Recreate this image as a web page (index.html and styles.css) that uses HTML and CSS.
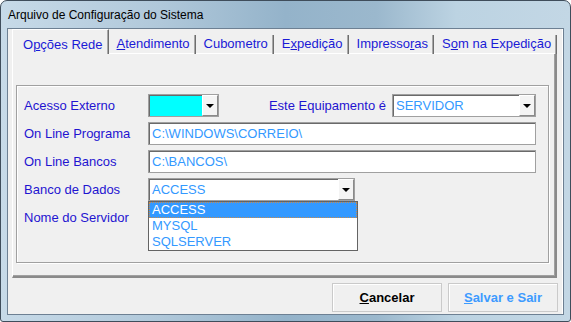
FILE: index.html
```html
<!DOCTYPE html>
<html lang="pt">
<head>
  <meta charset="UTF-8" />
  <title>Arquivo de Configuração do Sistema</title>
  <link rel="stylesheet" href="styles.css">
</head>
<body>
  <div class="window">
    <div class="titlebar">Arquivo de Configuração do Sistema</div>

    <div class="client">
      <div class="tabs">
        <div class="tab-strip">
          <span class="tab active">O<u>p</u>ções Rede</span>
          <span class="tab"><u>A</u>tendimento</span>
          <span class="tab">Cubometro</span>
          <span class="tab">E<u>x</u>pedição</span>
          <span class="tab">Impresso<u>r</u>as</span>
          <span class="tab">S<u>o</u>m na Expedição</span>
        </div>

        <div class="tab-page">
          <div class="frame">
            <div class="row">
              <span class="label">Acesso Externo</span>
              <div class="combo combo-small cyan">
                <span class="value"></span>
                <span class="drop"><span class="arrow"></span></span>
              </div>
              <span class="label label-right">Este Equipamento é</span>
              <div class="combo combo-server">
                <span class="value">SERVIDOR</span>
                <span class="drop"><span class="arrow"></span></span>
              </div>
            </div>

            <div class="row">
              <span class="label">On Line Programa</span>
              <div class="edit">C:\WINDOWS\CORREIO\</div>
            </div>

            <div class="row">
              <span class="label">On Line Bancos</span>
              <div class="edit">C:\BANCOS\</div>
            </div>

            <div class="row">
              <span class="label">Banco de Dados</span>
              <div class="combo combo-db">
                <span class="value">ACCESS</span>
                <span class="drop"><span class="arrow"></span></span>
                <!-- open list of the combo -->
                <ul class="droplist">
                  <li class="selected">ACCESS</li>
                  <li>MYSQL</li>
                  <li>SQLSERVER</li>
                </ul>
              </div>
            </div>

            <div class="row">
              <span class="label">Nome do Servidor</span>
            </div>
          </div>
        </div>
      </div>

      <div class="buttons">
        <button type="button" class="btn"><u>C</u>ancelar</button>
        <button type="button" class="btn btn-save"><u>S</u>alvar e Sair</button>
      </div>
    </div>
  </div>
</body>
</html>
```

FILE: styles.css
```css
body {
  margin: 0;
  background: #ffffff;
  font-family: "Liberation Sans", Arial, sans-serif;
  font-size: 13px;
}
.window {
  width: 571px;
  height: 322px;
  box-sizing: border-box;
  border: 1px solid #3f4d5b;
  border-radius: 7px 7px 3px 3px;
  padding: 0 6px 6px;
  display: flex;
  flex-direction: column;
  background: linear-gradient(90deg, #c7dae8 0%, #b0c8da 28%, #94b3ca 50%, #9bb8cd 66%, #bcd3e2 80%, #c3d7e5 100%);
}
.titlebar {
  height: 27px;
  line-height: 29px;
  padding-left: 1px;
  font-size: 12px;
  color: #000000;
}
.client {
  flex: 1;
  background: #f0f0f0;
  border: 1px solid #6d8093;
  box-shadow: inset -1px 0 0 #ffffff;
  display: flex;
  flex-direction: column;
}

/* tab control */
.tabs {
  margin: 0 6px 0 4px;
}
.tab-strip {
  display: flex;
  align-items: flex-end;
  height: 25px;
  margin-bottom: -1px;
  position: relative;
  z-index: 1;
}
.tab {
  height: 19px;
  line-height: 18px;
  padding: 0 5px 0 8px;
  color: #1a1ad6;
  white-space: nowrap;
  border-right: 1px solid #6e6e6e;
  box-shadow: inset -1px 0 0 #a8a8a8;
  box-sizing: border-box;
}
.tab u {
  text-decoration-thickness: 1px;
}
.tab.active {
  height: 25px;
  padding: 6px 5px 0 10px;
  background: #f0f0f0;
  border-left: 1px solid #ffffff;
  border-top: 1px solid #ffffff;
}
.tab-page {
  height: 225px;
  box-sizing: border-box;
  border-left: 1px solid #ffffff;
  border-top: 1px solid #ffffff;
  border-right: 2px solid #8a8a8a;
  border-bottom: 2px solid #8a8a8a;
  box-shadow: inset -1px -1px 0 #a0a0a0;
  padding-top: 31px;
}
.frame {
  height: 178px;
  box-sizing: border-box;
  margin: 0 6px 0 3px;
  border: 1px solid #a0a0a0;
  box-shadow: inset 1px 1px 0 #ffffff, 1px 1px 0 #ffffff;
  padding: 8px 12px 0 7px;
}

/* form rows */
.row {
  display: flex;
  align-items: center;
  height: 23px;
  margin-bottom: 5px;
}
.label {
  width: 124px;
  flex: none;
  color: #1f14d0;
}
.label-right {
  width: auto;
  margin-left: auto;
  margin-right: 6px;
}
.edit,
.combo {
  height: 23px;
  box-sizing: border-box;
  border: 1px solid #a0a0a0;
  box-shadow: inset 1px 1px 0 #6a6a6a;
  background: #ffffff;
  color: #3399ff;
  line-height: 21px;
}
.edit {
  flex: 1;
  padding-left: 3px;
}
.combo {
  display: flex;
  position: relative;
}
.combo .value {
  flex: 1;
  padding-left: 3px;
}
.combo-small {
  width: 71px;
}
.combo-server {
  width: 144px;
}
.combo-db {
  width: 207px;
}
.cyan .value {
  background: #00ffff;
  margin: 1px 0 0 1px;
}
.drop {
  width: 16px;
  height: 21px;
  box-sizing: border-box;
  display: flex;
  align-items: center;
  justify-content: center;
  background: #f4f4f4;
  border-left: 1px solid #ffffff;
  border-top: 1px solid #ffffff;
  border-right: 1px solid #8a8a8a;
  border-bottom: 1px solid #8a8a8a;
}
.arrow {
  width: 0;
  height: 0;
  border-left: 4px solid transparent;
  border-right: 4px solid transparent;
  border-top: 4px solid #000000;
}
.droplist {
  position: absolute;
  top: calc(100% + 1px);
  left: -1px;
  width: 210px;
  box-sizing: border-box;
  margin: 0;
  padding: 0;
  list-style: none;
  background: #ffffff;
  border: 1px solid #646464;
  z-index: 2;
}
.droplist li {
  height: 16px;
  line-height: 16px;
  padding-left: 3px;
}
.droplist li.selected {
  background: #3399ff;
  color: #ffffff;
  outline: 1px dotted #c98a4a;
  outline-offset: -1px;
}

/* bottom buttons */
.buttons {
  display: flex;
  justify-content: flex-end;
  gap: 6px;
  margin: 5px 5px 0 0;
}
.btn {
  width: 110px;
  height: 29px;
  border: 1px solid #cacaca;
  background: #f0f0f0;
  box-shadow: inset 1px 1px 0 #ffffff;
  font-family: "Liberation Sans", Arial, sans-serif;
  font-size: 13px;
  font-weight: bold;
  color: #000000;
  padding: 0;
}
.btn-save {
  color: #3d9bff;
}
```
